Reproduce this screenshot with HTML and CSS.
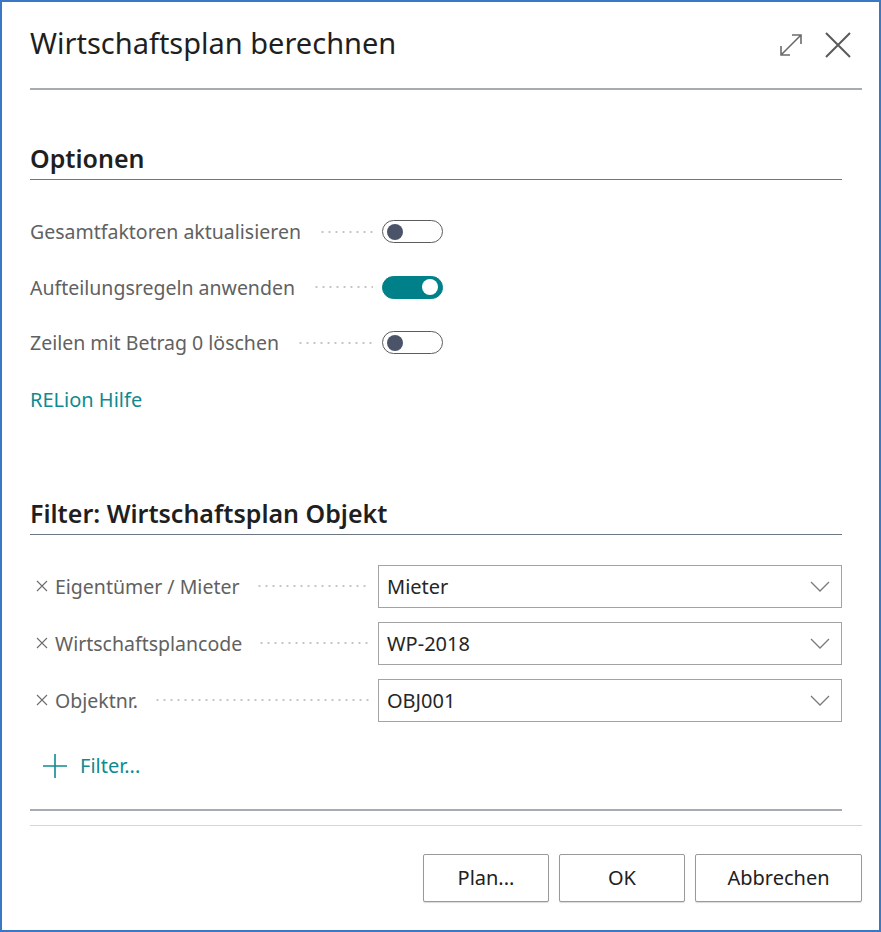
FILE: index.html
```html
<!DOCTYPE html>
<html lang="de">
<head>
<meta charset="utf-8">
<title>Wirtschaftsplan berechnen</title>
<link rel="stylesheet" href="styles.css">
</head>
<body>
<div class="dialog">
  <div class="header">
    <h1 class="title">Wirtschaftsplan berechnen</h1>
    <div class="header-icons">
      <svg class="icon-expand" width="26" height="26" viewBox="0 0 26 26" aria-hidden="true">
        <path d="M3 23 L23 3 M14 3 H23 V12 M3 14 V23 H12" fill="none" stroke="#6b6b6b" stroke-width="1.6"/>
      </svg>
      <svg class="icon-close" width="26" height="26" viewBox="0 0 26 26" aria-hidden="true">
        <path d="M1 1 L25 25 M25 1 L1 25" fill="none" stroke="#5a5a5a" stroke-width="2"/>
      </svg>
    </div>
  </div>

  <div class="content">
    <h2 class="section-title first">Optionen</h2>
    <div class="options">
      <div class="opt-row">
        <span class="label">Gesamtfaktoren aktualisieren</span>
        <span class="dots"></span>
        <span class="toggle"><span class="knob"></span></span>
      </div>
      <div class="opt-row">
        <span class="label">Aufteilungsregeln anwenden</span>
        <span class="dots"></span>
        <span class="toggle on"><span class="knob"></span></span>
      </div>
      <div class="opt-row">
        <span class="label">Zeilen mit Betrag 0 löschen</span>
        <span class="dots"></span>
        <span class="toggle"><span class="knob"></span></span>
      </div>
    </div>
    <a class="link help">RELion Hilfe</a>

    <h2 class="section-title second">Filter: Wirtschaftsplan Objekt</h2>
    <div class="filters">
      <div class="filter-row">
        <div class="filter-label"><svg class="x" width="12" height="12" viewBox="0 0 12 12" aria-hidden="true"><path d="M1 1 L11 11 M11 1 L1 11" fill="none" stroke="#6d6d6d" stroke-width="1.1"/></svg><span class="label">Eigentümer / Mieter</span><span class="dots"></span></div>
        <div class="select"><span>Mieter</span><svg width="20" height="11" viewBox="0 0 20 11" aria-hidden="true"><path d="M1 1 L10 10 L19 1" fill="none" stroke="#7a7a7a" stroke-width="1.3"/></svg></div>
      </div>
      <div class="filter-row">
        <div class="filter-label"><svg class="x" width="12" height="12" viewBox="0 0 12 12" aria-hidden="true"><path d="M1 1 L11 11 M11 1 L1 11" fill="none" stroke="#6d6d6d" stroke-width="1.1"/></svg><span class="label">Wirtschaftsplancode</span><span class="dots"></span></div>
        <div class="select"><span>WP-2018</span><svg width="20" height="11" viewBox="0 0 20 11" aria-hidden="true"><path d="M1 1 L10 10 L19 1" fill="none" stroke="#7a7a7a" stroke-width="1.3"/></svg></div>
      </div>
      <div class="filter-row">
        <div class="filter-label"><svg class="x" width="12" height="12" viewBox="0 0 12 12" aria-hidden="true"><path d="M1 1 L11 11 M11 1 L1 11" fill="none" stroke="#6d6d6d" stroke-width="1.1"/></svg><span class="label">Objektnr.</span><span class="dots"></span></div>
        <div class="select"><span>OBJ001</span><svg width="20" height="11" viewBox="0 0 20 11" aria-hidden="true"><path d="M1 1 L10 10 L19 1" fill="none" stroke="#7a7a7a" stroke-width="1.3"/></svg></div>
      </div>
    </div>
    <a class="link add-filter"><svg width="26" height="26" viewBox="0 0 26 26" aria-hidden="true"><path d="M13 1 V25 M1 13 H25" fill="none" stroke="#0f8a8f" stroke-width="1.6"/></svg><span>Filter...</span></a>
    <div class="sep"></div>
  </div>

  <div class="footer">
    <div class="buttons">
      <button class="btn btn-plan">Plan...</button>
      <button class="btn btn-ok">OK</button>
      <button class="btn btn-cancel">Abbrechen</button>
    </div>
  </div>
</div>
</body>
</html>
```

FILE: styles.css
```css
html, body {
  margin: 0;
  padding: 0;
  background: #ffffff;
}

.dialog {
  width: 881px;
  height: 932px;
  box-sizing: border-box;
  border: 2px solid #3a78c4;
  display: flex;
  flex-direction: column;
  font-family: "Noto Sans", "Open Sans", sans-serif;
  color: #212121;
  background: #fff;
}

.header {
  height: 86px;
  margin: 0 17px 0 28px;
  border-bottom: 2px solid #a6acb1;
  display: flex;
  align-items: center;
  justify-content: space-between;
}

.title {
  margin: 0;
  font-size: 29px;
  font-weight: 400;
  line-height: 36px;
  color: #1f1f1f;
  position: relative;
  top: -2px;
}

.header-icons {
  display: flex;
  align-items: center;
  gap: 21px;
  margin-right: 11px;
}

.icon-expand { display: block; }
.icon-close { display: block; }

.content {
  margin: 0 37px 0 28px;
  display: flex;
  flex-direction: column;
  align-items: flex-start;
}

.section-title {
  align-self: stretch;
  margin: 0;
  font-size: 25px;
  font-weight: 600;
  line-height: 32px;
  padding-bottom: 5px;
  border-bottom: 1px solid #6c7784;
  color: #1f1f1f;
}

.section-title.first { margin-top: 52px; }
.section-title.second { margin-top: 84px; padding-bottom: 5px; }

.options {
  margin-top: 24px;
  display: flex;
  flex-direction: column;
}

.opt-row {
  width: 413px;
  height: 55.5px;
  display: flex;
  align-items: center;
}

.label {
  font-size: 19.5px;
  color: #616161;
  white-space: nowrap;
}

.dots {
  flex: 1;
  height: 6px;
  margin: 0 9px 0 18px;
  background-image: radial-gradient(circle, #c4c4c4 0.9px, transparent 1.3px);
  background-size: 7px 6px;
  background-repeat: repeat-x;
  background-position: left center;
}

.toggle {
  width: 51px;
  height: 21px;
  border: 1.5px solid #5c5c5c;
  border-radius: 13px;
  display: flex;
  align-items: center;
  padding: 0 4px;
  box-sizing: content-box;
  flex: none;
}

.knob {
  width: 16px;
  height: 16px;
  border-radius: 50%;
  background: #4b5369;
}

.toggle.on {
  background: #00818a;
  border-color: #00818a;
  justify-content: flex-end;
}

.toggle.on .knob { background: #fff; }

.link {
  color: #0f8a8f;
  font-size: 20px;
  line-height: 26px;
  cursor: pointer;
}

.help { margin-top: 16px; }

.filters {
  margin-top: 23px;
  align-self: stretch;
  display: flex;
  flex-direction: column;
}

.filter-row {
  height: 57px;
  display: grid;
  grid-template-columns: 348px 1fr;
  align-items: center;
}

.filter-label {
  display: flex;
  align-items: center;
  padding-left: 6px;
}

.filter-label .x {
  display: block;
  flex: none;
  margin-right: 7px;
}

.filter-label .label {
  font-size: 19.5px;
}

.filter-label .dots {
  margin: 0 8px 0 16px;
}

.select {
  height: 43px;
  box-sizing: border-box;
  border: 1px solid #a3a3a3;
  display: flex;
  align-items: center;
  justify-content: space-between;
  padding: 0 11px 0 8px;
  font-size: 20px;
  color: #262626;
}

.select svg { display: block; }

.add-filter {
  margin-top: 24px;
  margin-left: 12px;
  display: flex;
  align-items: center;
  gap: 12px;
}

.add-filter svg { display: block; }

.sep {
  align-self: stretch;
  margin-top: 30px;
  border-top: 2px solid #a6acb1;
}

.footer {
  margin: 14px 17px 0 28px;
  border-top: 1px solid #d6d6d6;
}

.buttons {
  display: flex;
  justify-content: flex-end;
  gap: 10px;
  margin-top: 28px;
}

.btn {
  height: 48px;
  box-sizing: border-box;
  background: #fff;
  border: 1px solid #9a9a9a;
  border-radius: 2px;
  box-shadow: 0 1px 1px rgba(0,0,0,0.15);
  font-family: "Noto Sans", "Open Sans", sans-serif;
  font-size: 20px;
  color: #212121;
  padding: 0;
}

.btn-plan { width: 126px; }
.btn-ok { width: 126px; }
.btn-cancel { width: 167px; }
```
